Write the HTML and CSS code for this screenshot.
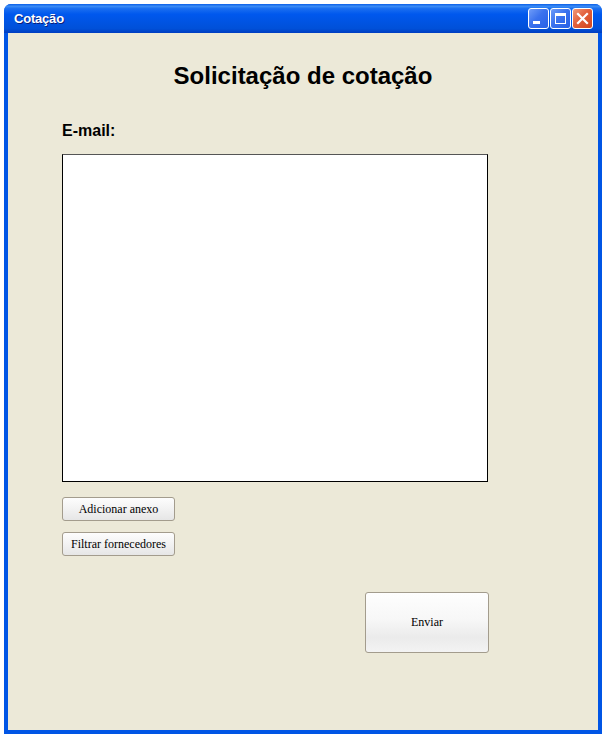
FILE: index.html
```html
<!DOCTYPE html>
<html lang="pt">
<head>
<meta charset="utf-8">
<title>Cotação</title>
<link rel="stylesheet" href="styles.css">
</head>
<body>
<div class="window">
  <div class="titlebar">
    <span class="title">Cotação</span>
    <div class="controls">
      <div class="cbtn"><svg width="21" height="21" viewBox="0 0 21 21"><rect x="5" y="13" width="7" height="3" fill="#fff"/></svg></div>
      <div class="cbtn"><svg width="21" height="21" viewBox="0 0 21 21"><rect x="5.5" y="5.5" width="10" height="10" fill="none" stroke="#fff" stroke-width="1"/><rect x="5" y="5" width="11" height="3" fill="#fff"/></svg></div>
      <div class="cbtn close"><svg width="21" height="21" viewBox="0 0 21 21"><path d="M6 6 L15 15 M15 6 L6 15" stroke="#fff" stroke-width="2.2" stroke-linecap="square"/></svg></div>
    </div>
  </div>
  <div class="client">
    <h1 class="heading">Solicitação de cotação</h1>
    <div class="form">
      <label class="label">E-mail:</label>
      <div class="textarea"></div>
      <button class="btn small">Adicionar anexo</button>
      <button class="btn small">Filtrar fornecedores</button>
      <div class="send-row"><button class="btn send">Enviar</button></div>
    </div>
  </div>
</div>
</body>
</html>
```
FILE: styles.css
```css
html, body { margin: 0; padding: 0; background: #fff; }
.window {
  margin: 4px 3px 4px 4px;
  width: 598px;
  height: 730px;
  display: flex;
  flex-direction: column;
  background: #0055e5;
  border-radius: 7px 7px 0 0;
  box-sizing: border-box;
}
.titlebar {
  height: 29px;
  flex: none;
  display: flex;
  align-items: center;
  justify-content: space-between;
  padding: 0 9px 0 10px;
  border-radius: 7px 7px 0 0;
  background: linear-gradient(to bottom, #0a5fe8 0%, #3b8cf5 8%, #1a6ef0 16%, #0058ee 35%, #0054e3 60%, #0050d8 85%, #003dc0 100%);
}
.title {
  color: #fff;
  font-family: "Liberation Sans", Arial, sans-serif;
  font-weight: bold;
  font-size: 13px;
  letter-spacing: -0.2px;
  text-shadow: 1px 1px 0 #0a1e7a;
  margin-top: -1px;
}
.controls { display: flex; gap: 1px; }
.cbtn {
  width: 21px; height: 21px;
  box-sizing: border-box;
  border: 1px solid #fff;
  border-radius: 3px;
  background: linear-gradient(135deg, #6f9cf8 0%, #3b72ee 45%, #2660e6 100%);
  display: flex;
}
.cbtn svg { margin: -1px; }
.cbtn.close { background: linear-gradient(135deg, #f09a7a 0%, #e2603c 45%, #d2461e 100%); }
.client {
  flex: 1;
  margin: 0 4px 4px 4px;
  background: #ece9d8;
  display: flex;
  flex-direction: column;
}
.heading {
  margin: 29px 0 0 0;
  text-align: center;
  font-family: "Liberation Sans", Arial, sans-serif;
  font-weight: bold;
  font-size: 24px;
  color: #000;
  line-height: 28px;
}
.form {
  padding: 0 0 0 54px;
  display: flex;
  flex-direction: column;
  align-items: flex-start;
}
.label {
  margin-top: 32px;
  font-family: "Liberation Sans", Arial, sans-serif;
  font-weight: bold;
  font-size: 16px;
  line-height: 18px;
  color: #000;
}
.textarea {
  margin-top: 14px;
  width: 426px;
  height: 328px;
  box-sizing: border-box;
  background: #fff;
  border: 1px solid #000;
  border-top-color: #555;
}
.btn {
  font-family: "Liberation Serif", "Times New Roman", serif;
  font-size: 12px;
  color: #000;
  border: 1px solid #a39c8d;
  border-radius: 3px;
  background: linear-gradient(to bottom, #fdfdfd 0%, #f2f2f2 50%, #e6e6e6 100%);
  padding: 0;
  cursor: default;
}
.btn.small {
  width: 113px;
  height: 24px;
  margin-top: 15px;
}
.btn.small + .btn.small { margin-top: 11px; }
.send-row {
  width: 427px;
  display: flex;
  justify-content: flex-end;
  margin-top: 36px;
}
.btn.send {
  width: 124px;
  height: 61px;
  background: linear-gradient(to bottom, #fefefe 0%, #f7f7f7 45%, #ebebeb 75%, #f3f3f3 100%);
}
```
